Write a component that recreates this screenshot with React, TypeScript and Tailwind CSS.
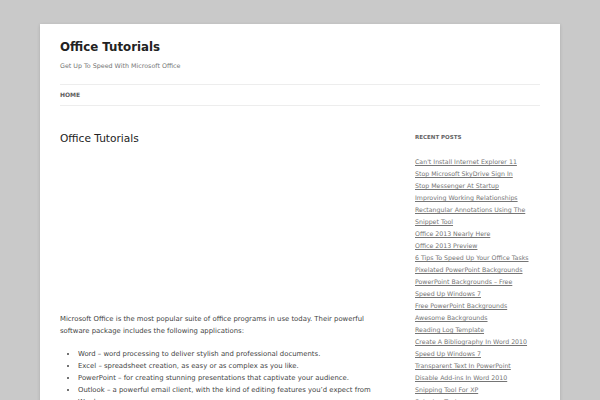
const recentPosts = [
  "Can't Install Internet Explorer 11",
  "Stop Microsoft SkyDrive Sign In",
  "Stop Messenger At Startup",
  "Improving Working Relationships",
  "Rectangular Annotations Using The Snippet Tool",
  "Office 2013 Nearly Here",
  "Office 2013 Preview",
  "6 Tips To Speed Up Your Office Tasks",
  "Pixelated PowerPoint Backgrounds",
  "PowerPoint Backgrounds – Free",
  "Speed Up Windows 7",
  "Free PowerPoint Backgrounds",
  "Awesome Backgrounds",
  "Reading Log Template",
  "Create A Bibliography In Word 2010",
  "Speed Up Windows 7",
  "Transparent Text In PowerPoint",
  "Disable Add-ins In Word 2010",
  "Snipping Tool For XP",
  "Snipping Tool",
];

const apps = [
  "Word – word processing to deliver stylish and professional documents.",
  "Excel – spreadsheet creation, as easy or as complex as you like.",
  "PowerPoint – for creating stunning presentations that captivate your audience.",
  "Outlook – a powerful email client, with the kind of editing features you’d expect from Word.",
];

export default function App() {
  return (
    <div className="h-[400px] overflow-hidden bg-[#c9c9c9] px-10 pt-6 font-['DejaVu_Sans',sans-serif] text-[#444]">
      <div className="min-h-[500px] bg-white px-5 shadow-[0_1px_3px_rgba(100,100,100,0.3)]">
        <header className="pt-[14px]">
          <h1 className="text-[11.8px] font-bold leading-[18px] text-[#222]">
            Office Tutorials
          </h1>
          <p className="mt-[4px] text-[6.35px] leading-[12px] text-[#757575]">
            Get Up To Speed With Microsoft Office
          </p>
          <nav className="mt-[12px] border-y border-[#ededed] py-[5px] text-[6px] font-bold uppercase leading-[10px] text-[#5e5e5e]">
            Home
          </nav>
        </header>

        <div className="mt-6 flex justify-between">
          <main className="w-[312px]">
            <h2 className="pt-px text-[10.6px] leading-[14px] text-[#222]">Office Tutorials</h2>
            <div className="h-[168px]" />
            <p className="text-[6.88px] leading-[12px]">
              Microsoft Office is the most popular suite of office programs in use today. Their
              powerful software package includes the following applications:
            </p>
            <ul className="mt-[11px] ml-[18px] list-disc text-[6.88px] leading-[12px]">
              {apps.map((a) => (
                <li key={a}>{a}</li>
              ))}
            </ul>
          </main>

          <aside className="w-[125px]">
            <h3 className="text-[5.5px] font-bold uppercase leading-[14px] text-[#636363]">
              Recent Posts
            </h3>
            <ul className="mt-[12px] text-[6.25px] leading-[12px]">
              {recentPosts.map((p, i) => (
                <li key={i}>
                  <a href="#" className="text-[#757575] underline">
                    {p}
                  </a>
                </li>
              ))}
            </ul>
          </aside>
        </div>
      </div>
    </div>
  );
}
